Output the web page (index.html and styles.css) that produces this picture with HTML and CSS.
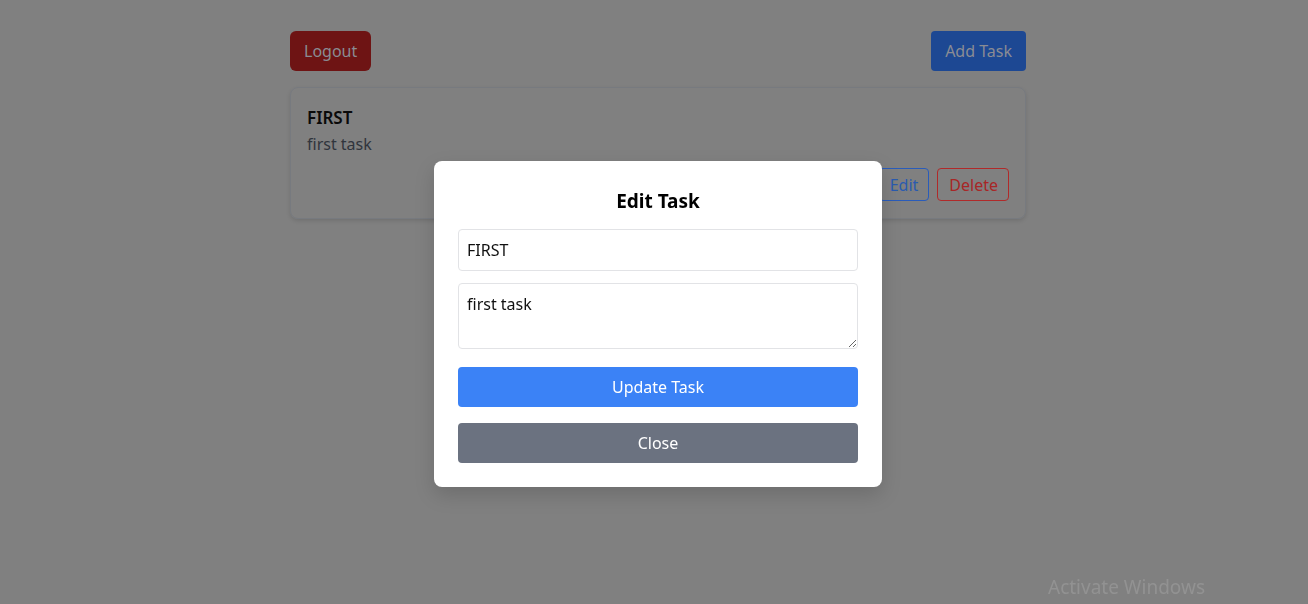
FILE: index.html
```html
<!DOCTYPE html>
<html lang="en">
<head>
<meta charset="utf-8">
<title>Tasks</title>
<link rel="stylesheet" href="styles.css">
</head>
<body>
<main class="page">
  <div class="container">
    <div class="toolbar">
      <button class="btn btn-logout">Logout</button>
      <button class="btn btn-add">Add Task</button>
    </div>
    <div class="card">
      <h3 class="card-title">FIRST</h3>
      <p class="card-desc">first task</p>
      <div class="card-actions">
        <button class="btn-outline btn-edit">Edit</button>
        <button class="btn-outline btn-delete">Delete</button>
      </div>
    </div>
  </div>
</main>
<div class="overlay">
  <div class="modal">
    <h2 class="modal-title">Edit Task</h2>
    <input class="field" type="text" value="FIRST">
    <textarea class="field area">first task</textarea>
    <button class="btn-block btn-update">Update Task</button>
    <button class="btn-block btn-close">Close</button>
  </div>
</div>
<div class="watermark">Activate Windows</div>
</body>
</html>
```
FILE: styles.css
```css
* { box-sizing: border-box; }
html, body { margin: 0; height: 100%; }
body {
  background: #808080;
  font-family: "Noto Sans", "Open Sans", sans-serif;
  font-size: 16px;
  color: #000;
  padding-left: 8px;
  overflow: hidden;
}
.page {
  display: flex;
  justify-content: center;
  padding-top: 31px;
}
.container {
  width: 736px;
}
.toolbar {
  display: flex;
  justify-content: space-between;
  margin-bottom: 16px;
}
.btn {
  font: inherit;
  border: none;
  height: 40px;
  padding: 0 14px;
  color: #8a8c93;
  cursor: pointer;
}
.btn-logout { background: #6e1414; border-radius: 6px; }
.btn-add { background: #1d4893; border-radius: 4px; }
.card {
  border: 1px solid #777a7f;
  border-radius: 8px;
  padding: 16px;
  box-shadow: 0 2px 4px rgba(0,0,0,0.12);
  height: 132px;
}
.card-title {
  margin: 0;
  font-size: 17px;
  font-weight: 600;
  line-height: 28px;
  color: #0a0a0a;
}
.card-desc {
  margin: 0;
  line-height: 24px;
  color: #30353d;
}
.card-actions {
  display: flex;
  justify-content: flex-end;
  gap: 8px;
  margin-top: 12px;
}
.btn-outline {
  font: inherit;
  font-size: 16px;
  background: transparent;
  border: 1px solid;
  border-radius: 4px;
  height: 33px;
  padding: 0 10px;
}
.btn-edit { color: #2a5bb0; border-color: #2a5cba; }
.btn-delete { color: #a82626; border-color: #b02a2a; padding: 0 10px 0 11px; }
.overlay {
  position: fixed;
  inset: 0;
  display: flex;
  justify-content: center;
  align-items: flex-start;
  padding-top: 161px;
  padding-left: 8px;
}
.modal {
  width: 448px;
  background: #fff;
  border-radius: 8px;
  padding: 24px;
  display: flex;
  flex-direction: column;
  box-shadow: 0 8px 20px rgba(0,0,0,0.15);
}
.modal-title {
  margin: 2px 0 14px;
  text-align: center;
  font-size: 19px;
  font-weight: 700;
  line-height: 28px;
}
.field {
  font: inherit;
  color: #111;
  border: 1px solid #e2e3e6;
  border-radius: 4px;
  padding: 8px;
  line-height: 24px;
  height: 42px;
  outline: none;
}
.area {
  margin-top: 12px;
  height: 66px;
  resize: vertical;
  display: block;
}
.btn-block {
  font: inherit;
  border: none;
  border-radius: 4px;
  height: 40px;
  color: #fff;
  cursor: pointer;
}
.btn-update { background: #3b82f6; margin-top: 18px; }
.btn-close { background: #6b7280; margin-top: 16px; }
.watermark {
  position: fixed;
  left: 1048px;
  top: 574px;
  font-size: 19px;
  color: #929292;
  pointer-events: none;
}
```
